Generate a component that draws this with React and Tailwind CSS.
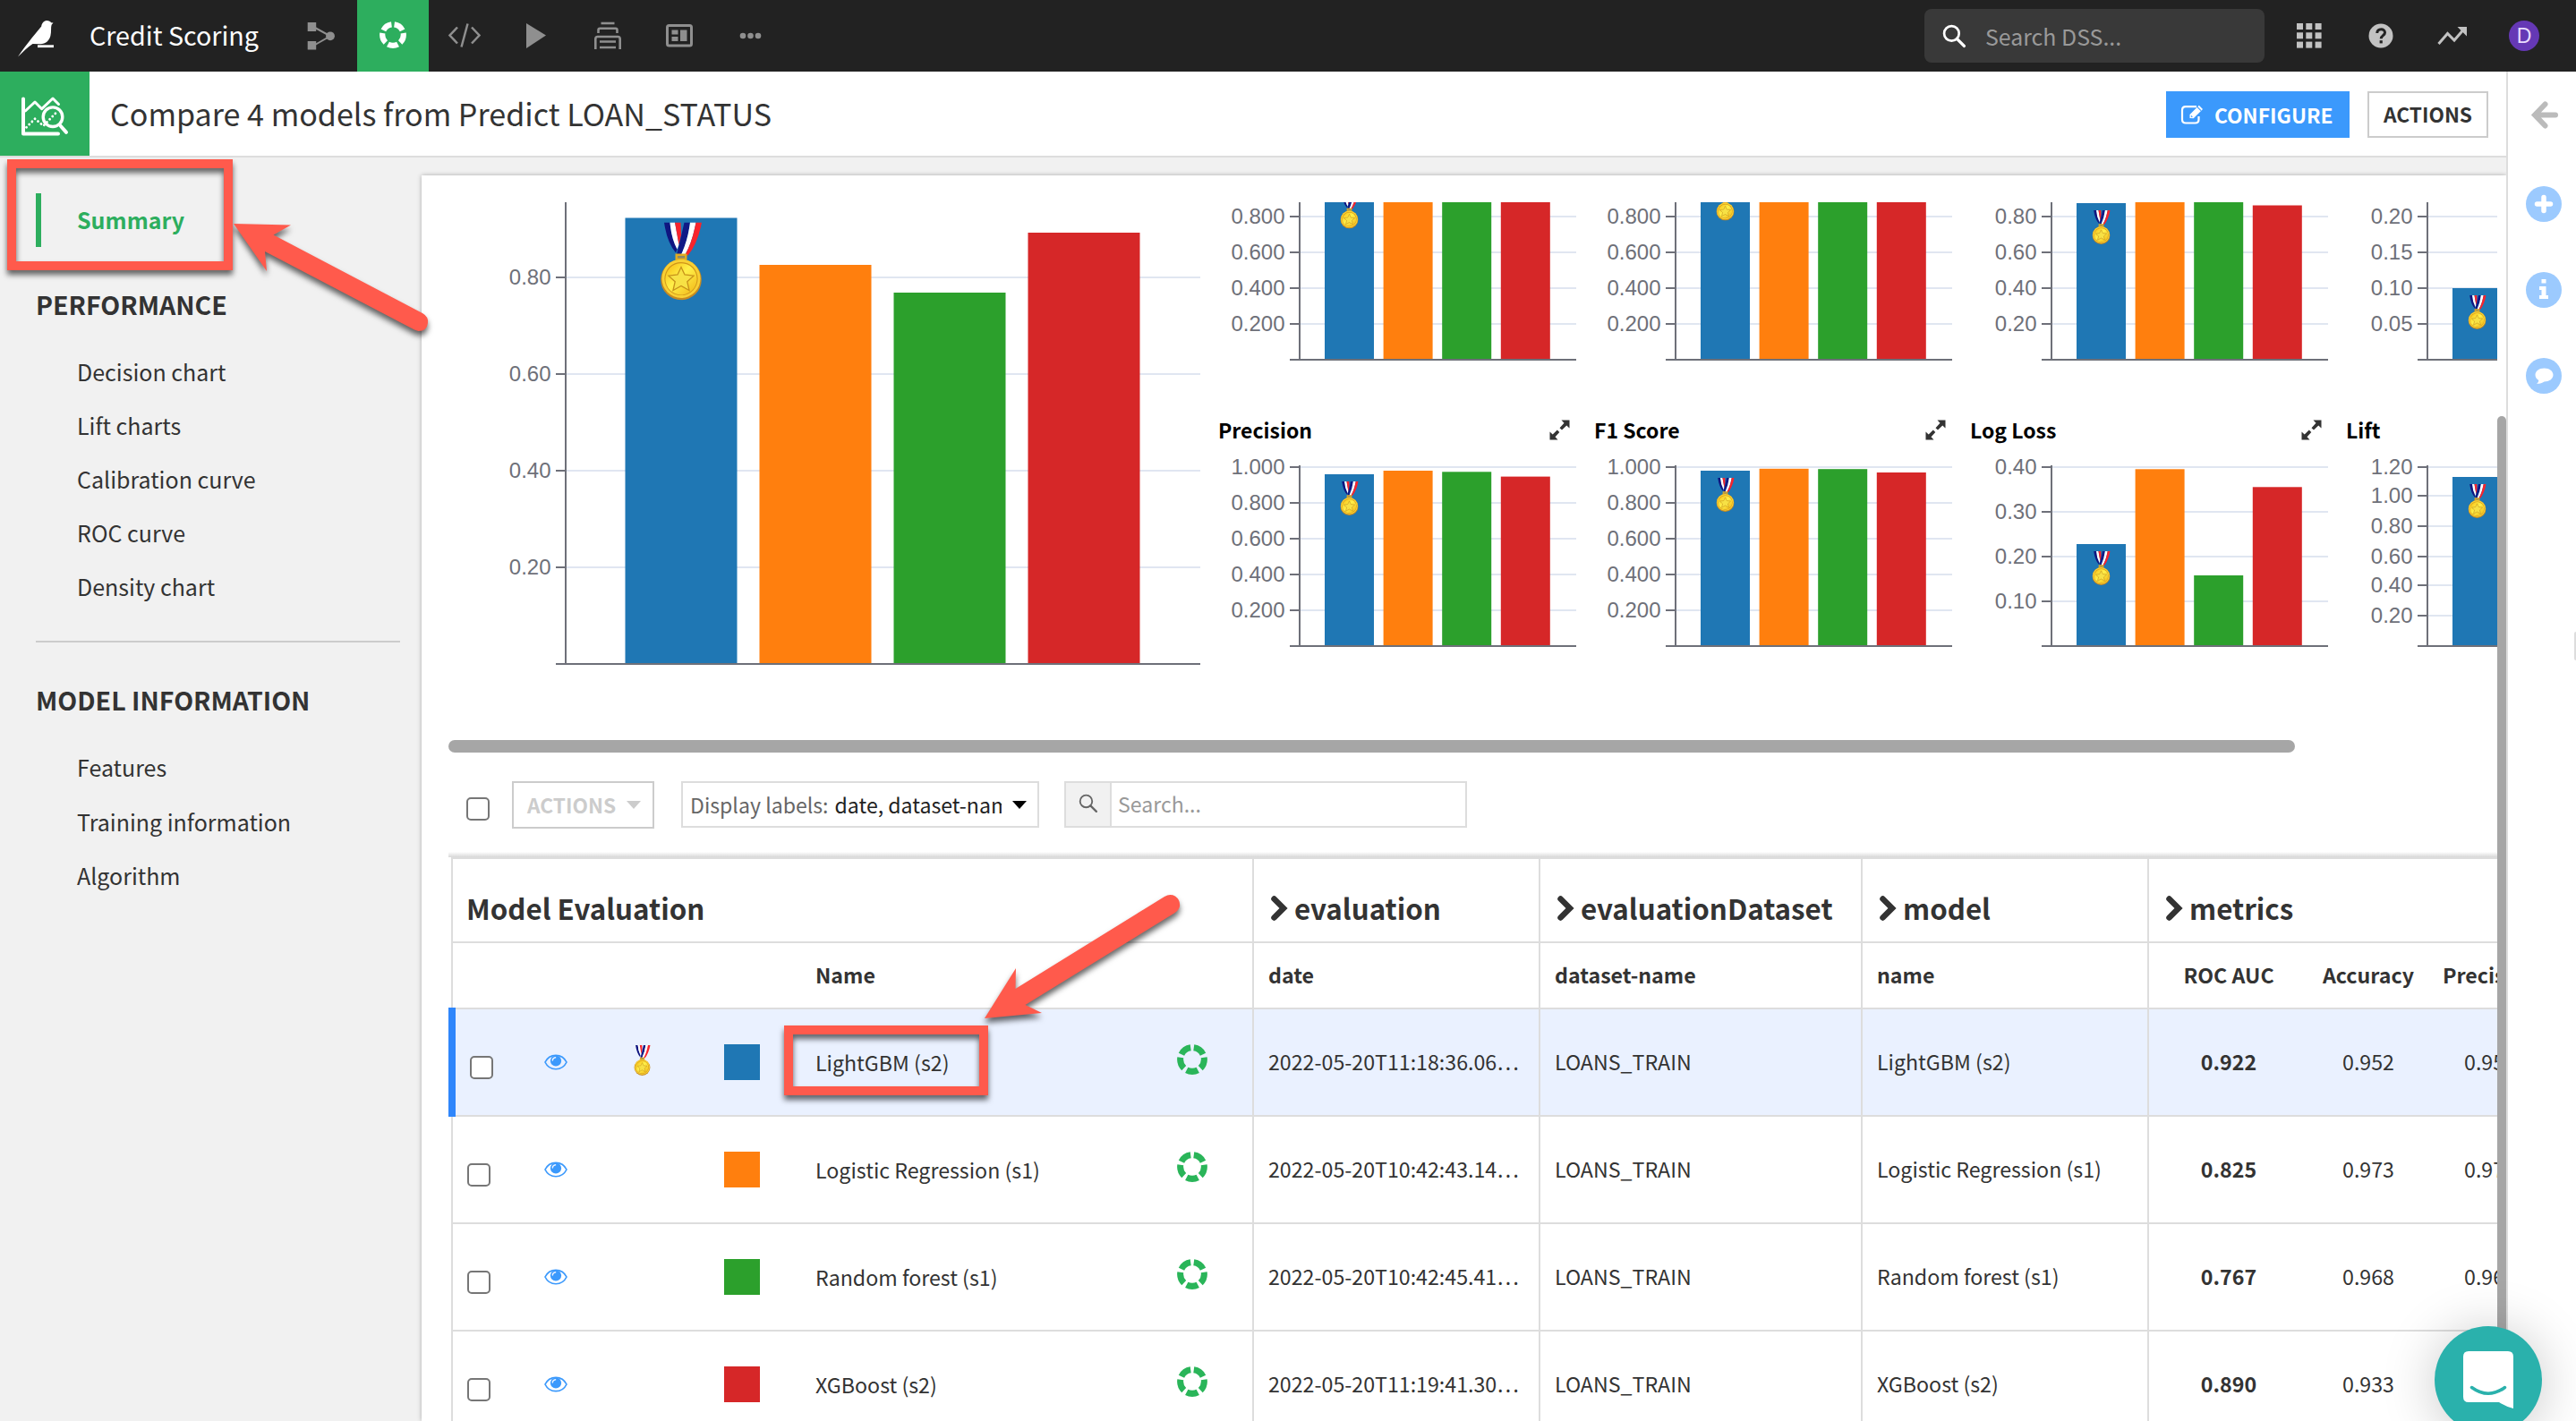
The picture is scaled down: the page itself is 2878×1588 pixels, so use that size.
import React, { useId } from "react";

const COLORS = ["#1f77b4", "#ff7f0e", "#2ca02c", "#d62728"];

/* ---------- icons ---------- */

function RecycleIcon({ size, color }) {
  return (
    <svg width={size} height={size} viewBox="0 0 30 30" fill="none">
      <circle
        cx="15"
        cy="15"
        r="11.8"
        stroke={color}
        strokeWidth="6.2"
        pathLength="100"
        strokeDasharray="15.6 4.4"
        strokeDashoffset="-2.2"
        transform="rotate(-90 15 15)"
      />
    </svg>
  );
}

function BirdLogo() {
  return (
    <svg width="44" height="46" viewBox="18 20 44 46" fill="#fff">
      <path d="M20 63.5 C25 56 30 49.5 35.5 42.5 L46.2 29.5 C46.8 25.5 49.3 23 52.5 23 C54.8 23 56.3 24 57 25.2 L59.5 25.6 L57.6 27.8 C56.6 31 57.6 35 56.4 40 C55 45.5 51 49.300 45 49.300 L36.500 49 C31 52.500 25.500 58 20 63.500 Z" />
      <rect x="42" y="50.300" width="18" height="2.800" />
    </svg>
  );
}

function FlowIcon() {
  return (
    <svg width="32" height="32" viewBox="343 23 32 32" fill="#8f8f8f">
      <rect x="343.700" y="24" width="9.500" height="10" />
      <rect x="343.700" y="45" width="9.500" height="9.500" />
      <circle cx="369" cy="39.300" r="4.900" />
      <path d="M352 30 L369 39.300 L352 49" fill="none" stroke="#8f8f8f" strokeWidth="2" />
    </svg>
  );
}

function CodeIcon() {
  return (
    <svg width="38" height="30" viewBox="0 0 38 30" fill="none" stroke="#8f8f8f" strokeWidth="2.500">
      <path d="M11 5.500 L2.500 14.500 L11 23.500 M27 5.500 L35.500 14.500 L27 23.500 M22.500 1.500 L15.500 27.500" />
    </svg>
  );
}

function PlayIcon() {
  return (
    <svg width="24" height="30" viewBox="0 0 24 30" fill="#8f8f8f">
      <path d="M1 1 L23 14.500 L1 29 Z" />
    </svg>
  );
}

function StackIcon() {
  return (
    <svg width="32" height="32" viewBox="0 0 32 32" fill="none" stroke="#8f8f8f" strokeWidth="2.600">
      <path d="M8.500 2 H23.500" />
      <path d="M5.500 13 V9.500 Q5.500 7.800 7.200 7.800 H24.800 Q26.500 7.800 26.500 9.500 V13" />
      <path d="M2.300 31 V19.500 Q2.300 17 4.800 17 H27.200 Q29.700 17 29.700 19.500 V31" />
      <path d="M7 22.500 H25 M7 29 H25" />
    </svg>
  );
}

function DashboardIcon() {
  return (
    <svg width="32" height="28" viewBox="0 0 32 28" fill="#8f8f8f">
      <rect x="2.500" y="2.500" width="27" height="22.500" rx="2" fill="none" stroke="#8f8f8f" strokeWidth="3" />
      <rect x="7.500" y="7.500" width="7" height="5" />
      <rect x="7.500" y="15" width="7" height="5" />
      <rect x="17" y="7.500" width="7.500" height="12.500" />
    </svg>
  );
}

function DotsIcon() {
  return (
    <svg width="26" height="8" viewBox="0 0 26 8" fill="#8f8f8f">
      <circle cx="4" cy="4" r="3.300" />
      <circle cx="12.500" cy="4" r="3.300" />
      <circle cx="21" cy="4" r="3.300" />
    </svg>
  );
}

function SearchIcon({ size, color, width }) {
  return (
    <svg width={size} height={size} viewBox="0 0 26 26" fill="none" stroke={color} strokeWidth={width}>
      <circle cx="10" cy="10" r="8" />
      <path d="M15.800 15.800 L23.500 23.500" strokeWidth={width * 1.25} strokeLinecap="round" />
    </svg>
  );
}

function GridIcon() {
  return (
    <svg width="28" height="28" viewBox="0 0 28 28" fill="#c2c2c2">
      {[0, 10.3, 20.6].map((y) =>
        [0, 10.3, 20.6].map((x) => <rect key={x + "-" + y} x={x} y={y} width="7" height="7" />)
      )}
    </svg>
  );
}

function HelpIcon() {
  return (
    <svg width="28" height="28" viewBox="0 0 28 28" fill="#c2c2c2">
      <circle cx="14" cy="14" r="13.500" />
      <path d="M9.800 11 C9.800 8.300 11.600 6.700 14.200 6.700 C16.800 6.700 18.500 8.300 18.500 10.500 C18.500 13.600 14.200 13.700 14.200 17.200" fill="none" stroke="#222" strokeWidth="3" />
      <rect x="12.600" y="19.200" width="3.200" height="3.200" fill="#222" />
    </svg>
  );
}

function TrendIcon() {
  return (
    <svg width="34" height="22" viewBox="0 0 34 22" fill="none" stroke="#c2c2c2" strokeWidth="3">
      <path d="M1.500 20 L11.500 8.500 L19 16 L29 4.500" />
      <path d="M22.500 1 H33 V11.500 Z" fill="#c2c2c2" stroke="none" />
    </svg>
  );
}

function ComparisonIcon() {
  return (
    <svg width="100" height="94" viewBox="0 0 100 94" fill="none" stroke="#fff" strokeWidth="4" strokeLinecap="round" strokeLinejoin="round">
      <path d="M26 30.500 V69.500 H65" />
      <path d="M28.300 44 L39 34 L46.700 41.700 L59 30 L65.500 36.500" strokeWidth="3" />
      <path d="M29.500 62.300 L39 52.700 L48.500 60.600 L62 46.700" strokeWidth="2.800" strokeDasharray="0.100 4.400" />
      <circle cx="59" cy="50.700" r="10.800" strokeWidth="3.400" />
      <path d="M67.500 60.500 L74 67.800" />
    </svg>
  );
}

function EditIcon() {
  return (
    <svg width="28" height="24" viewBox="0 0 28 24" fill="none" stroke="#fff" strokeWidth="2.200">
      <path d="M18 3.200 H6 Q2 3.200 2 7.200 V17.500 Q2 21.500 6 21.500 H16.500 Q20.500 21.500 20.500 17.500 V14" />
      <path d="M10.500 16 V12 L20.800 1.700 L25 5.900 L14.700 16.200 Z" fill="#fff" stroke="none" />
      <path d="M19 3.600 L23 7.600 M12 13.500 L13.300 14.800" stroke="#3b99fc" strokeWidth="1.200" />
    </svg>
  );
}

function EyeIcon() {
  return (
    <svg width="26" height="18" viewBox="0 0 26 18" fill="none">
      <path d="M1 9 C6 -1.300 20 -1.300 25 9 C20 19.300 6 19.300 1 9 Z" stroke="#3b99fc" strokeWidth="1.700" />
      <circle cx="13" cy="7.500" r="6.100" fill="#3b99fc" />
      <path d="M9.300 7 Q9.600 4 12.600 3.700" stroke="#eaf2ff" strokeWidth="1.400" strokeLinecap="round" />
    </svg>
  );
}

function ExpandIcon() {
  return (
    <svg width="23" height="23" viewBox="0 0 23 23" fill="#333">
      <path d="M13.500 0.500 H22.500 V9.500 L19.300 6.500 L14 11.500 L11.500 9.200 L16.500 3.700 Z" />
      <path d="M9.500 22.500 H0.500 V13.500 L3.700 16.500 L8.800 11.500 L11.300 14 L6.500 19.300 Z" />
    </svg>
  );
}

function ChevronIcon() {
  return (
    <svg width="21" height="30" viewBox="0 0 21 30" fill="none" stroke="#333" strokeWidth="6.500" strokeLinecap="round" strokeLinejoin="miter">
      <path d="M4.500 4.500 L15 15 L4.500 25.500" />
    </svg>
  );
}

function Medal({ x, y, width, height }) {
  const id = useId();
  return (
    <svg x={x} y={y} width={width} height={height} viewBox="0 0 46 87">
      <defs>
        <linearGradient id={id} x1="0" y1="0" x2="1" y2="1">
          <stop offset="0" stopColor="#f7b90f" />
          <stop offset="0.450" stopColor="#fff04a" />
          <stop offset="1" stopColor="#f0b414" />
        </linearGradient>
      </defs>
      <path d="M4 0 H10.500 Q12 18 18.500 30 L17 34 Q7 22 4 0 Z" fill="#0f1580" />
      <path d="M10.500 0 H16 L20.500 25 L18.500 30 Q12 18 10.500 0 Z" fill="#fff" />
      <path d="M16 0 H22.500 L23 14 L20.500 25 Z" fill="#f8242c" />
      <path d="M26.500 0 H33 Q30.500 20 23 36 H18 Q22.500 18 26.500 0 Z" fill="#101a86" />
      <path d="M33 0 H39.500 Q35.500 22 27.500 36 H23 Q30.500 20 33 0 Z" fill="#fff" />
      <path d="M39.500 0 H46 Q41.500 24 30.500 37 L27.500 36 Q35.500 22 39.500 0 Z" fill="#f8242c" />
      <path d="M16.500 35 H29.500 V44 H16.500 Z" fill="#e0ab22" />
      <path d="M19 37.500 H27 V40 H19 Z" fill="#8c8a6a" />
      <circle cx="23" cy="64" r="22.800" fill="#c58a22" />
      <circle cx="23" cy="62.800" r="21.600" fill="#f8d034" />
      <circle cx="23" cy="63" r="18.600" fill="#cf9418" />
      <circle cx="23" cy="63.300" r="17.600" fill={`url(#${id})`} />
      <path
        d="M23 50 L27 58.500 L37 59.700 L29.800 66.200 L32 76 L23 71 L14 76 L16.200 66.200 L9 59.700 L19 58.500 Z"
        fill="#f7e145"
        stroke="#c7921a"
        strokeWidth="1.300"
      />
    </svg>
  );
}

/* ---------- charts ---------- */

function BarChart({ width, height, tickX, axisX, axisTop, base, end, labelX, ticks, bars, barX, barW, pitch, medal }) {
  return (
    <svg width={width} height={height} className="block shrink-0">
      {ticks.map(([label, y]) => (
        <g key={label}>
          <rect x={axisX} y={y - 1} width={end - axisX} height="2" fill="#e0e6f1" />
          <rect x={tickX} y={y - 1} width={axisX - tickX} height="2" fill="#6e7079" />
          <text x={labelX} y={y + 7.5} textAnchor="end" fontSize="24" fill="#6e7079" className="font-['Liberation_Sans',sans-serif]">
            {label}
          </text>
        </g>
      ))}
      {bars.map((top, i) => (
        <rect key={i} x={barX + pitch * i} y={top} width={barW} height={base - top} fill={COLORS[i]} />
      ))}
      <rect x={axisX - 1} y={axisTop} width="2" height={base - axisTop} fill="#6e7079" />
      <rect x={tickX} y={base - 1} width={end - tickX} height="2" fill="#6e7079" />
      <Medal x={barX + barW / 2 - medal.w / 2} y={bars[0] + medal.gap} width={medal.w} height={medal.h} />
    </svg>
  );
}

const UPPER = [["0.800", 62], ["0.600", 102], ["0.400", 142], ["0.200", 182]];
const FULL = [["1.000", 22], ...UPPER];

/* The first four are scrolled under the panel's top edge, so only their lower part shows */
const SMALL_CHARTS = [
  { ticks: UPPER, bars: [29.5, 27, 28, 35] },
  { ticks: UPPER, bars: [20.5, 22, 22, 22] },
  { ticks: [["0.80", 62], ["0.60", 102], ["0.40", 142], ["0.20", 182]], bars: [47, 40, 42, 49.5] },
  { ticks: [["0.20", 62], ["0.15", 102], ["0.10", 142], ["0.05", 182]], bars: [142, 120, 120, 120] },
  { title: "Precision", ticks: FULL, bars: [30, 26, 27.3, 32.6] },
  { title: "F1 Score", ticks: FULL, bars: [26, 23.8, 24.2, 28] },
  { title: "Log Loss", ticks: [["0.40", 22], ["0.30", 72], ["0.20", 122], ["0.10", 172]], bars: [108, 24.3, 143, 44.3] },
  { title: "Lift", ticks: [["1.20", 22], ["1.00", 54], ["0.80", 88], ["0.60", 122], ["0.40", 154], ["0.20", 188]], bars: [33, 33, 33, 33] },
];

function SmallChart({ title, ticks, bars }) {
  return (
    <div className="h-80 w-[420px]">
      <div className="flex h-10 items-center justify-between pr-[27px]">
        {title && <span className="text-[23px] leading-10 font-bold text-black">{title}</span>}
        {title && <ExpandIcon />}
      </div>
      <BarChart
        width={420}
        height={280}
        tickX={80}
        axisX={91}
        axisTop={20}
        base={222}
        end={400}
        labelX={74.5}
        ticks={ticks}
        bars={bars}
        barX={119}
        barW={55}
        pitch={65.6}
        medal={{ w: 20.5, h: 38, gap: 8 }}
      />
    </div>
  );
}

/* ---------- page parts ---------- */

function TopBar() {
  const nav = [
    ["flow", <FlowIcon />],
    ["lab", <RecycleIcon size={30} color="#fff" />],
    ["code", <CodeIcon />],
    ["play", <PlayIcon />],
    ["stack", <StackIcon />],
    ["dash", <DashboardIcon />],
    ["more", <DotsIcon />],
  ];
  return (
    <header className="flex h-20 shrink-0 items-center bg-[#222]">
      <div className="flex w-[100px] items-center pt-1.5 pl-[18px]">
        <BirdLogo />
      </div>
      <div className="w-[219px] pb-0.5 text-[28.700px] leading-10 text-white">Credit Scoring</div>
      {nav.map(([key, icon]) => (
        <div key={key} className={key === "lab" ? "flex size-20 items-center justify-center bg-[#2dae5e] pb-0.5" : "flex size-20 items-center justify-center"}>
          {icon}
        </div>
      ))}
      <div className="mr-2.5 ml-auto flex h-15 w-[380px] items-center rounded-lg bg-[#393939] pl-5">
        <SearchIcon size={27} color="#fff" width={2.6} />
        <span className="ml-[21px] text-[24.900px] leading-10 text-[#999]">Search DSS...</span>
      </div>
      <div className="mr-[18px] flex">
        <div className="flex size-20 items-center justify-center"><GridIcon /></div>
        <div className="flex size-20 items-center justify-center"><HelpIcon /></div>
        <div className="flex size-20 items-center justify-center"><TrendIcon /></div>
        <div className="flex size-20 items-center justify-center">
          <div className="flex size-[34px] items-center justify-center rounded-full bg-[#6538b5] font-['Liberation_Sans',sans-serif] text-[23px] leading-none text-[#e8dcff]">D</div>
        </div>
      </div>
    </header>
  );
}

function TitleBar() {
  return (
    <div className="flex h-24 shrink-0 items-start border-b-2 border-[#ddd] bg-white pr-5">
      <div className="h-[94px] w-[100px] bg-[#2dae5e]"><ComparisonIcon /></div>
      <h1 className="ml-[23px] text-[34.100px] leading-[93px] font-normal text-[#333]">Compare 4 models from Predict LOAN_STATUS</h1>
      <button className="mt-[22px] ml-auto flex h-[52px] w-[205px] items-center gap-[10px] bg-[#3b99fc] pl-4 text-[22.800px] leading-[51px] font-bold text-white">
        <EditIcon />
        CONFIGURE
      </button>
      <button className="mt-[22px] ml-5 h-[52px] w-[135px] border-2 border-[#ccc] bg-white text-[22.700px] leading-[46px] font-bold text-[#333]">ACTIONS</button>
    </div>
  );
}

function NavItem({ children }) {
  return <div className="h-[60.1px] pl-[86px] text-[25px] leading-[62px] text-[#333]">{children}</div>;
}

function Sidebar() {
  return (
    <nav className="w-[471px] shrink-0 pt-10">
      <div className="ml-10 h-15 border-l-[6px] border-[#2dae5e] pl-10 text-[25px] leading-[58px] font-bold text-[#2dae5e]">
        Summary
      </div>
      <h2 className="mt-5 h-[88px] pl-10 text-[28.500px] leading-[88px] font-bold text-[#333]">PERFORMANCE</h2>
      {["Decision chart", "Lift charts", "Calibration curve", "ROC curve", "Density chart"].map((t) => <NavItem key={t}>{t}</NavItem>)}
      <div className="mt-8 ml-10 h-0.5 w-[407px] bg-[#ccc]" />
      <h2 className="mt-4 h-[92px] pl-10 text-[28.500px] leading-[95px] font-bold text-[#333]">MODEL INFORMATION</h2>
      {["Features", "Training information", "Algorithm"].map((t) => <NavItem key={t}>{t}</NavItem>)}
    </nav>
  );
}

function Checkbox({ className = "" }) {
  return <div className={"size-[26px] shrink-0 rounded-[5px] border-2 border-[#767676] bg-white " + className} />;
}

function Caret({ color }) {
  return (
    <svg width="16" height="9" viewBox="0 0 16 9" className="shrink-0" fill={color}>
      <path d="M0 0 H16 L8 9 Z" />
    </svg>
  );
}

function Toolbar() {
  return (
    <div className="flex h-[117px] shrink-0 items-start pt-8 pl-5 text-[23.100px]">
      <Checkbox className="mt-[18px]" />
      <div className="ml-[25px] flex h-[53px] w-[159px] items-center border-2 border-[#ccc] pl-[15px] text-[22.700px] leading-[47px] font-bold text-[#ccc]">
        ACTIONS
        <span className="ml-3"><Caret color="#ccc" /></span>
      </div>
      <div className="ml-[30px] flex h-[52px] w-[400px] items-center border-2 border-[#ddd] pl-2 leading-[47px] text-[#666]">
        <div className="w-[348px] overflow-hidden whitespace-nowrap">
          Display labels:<span className="ml-[7px] text-[#222]">date, dataset-name</span>
        </div>
        <span className="ml-3"><Caret color="#000" /></span>
      </div>
      <div className="ml-7 flex h-[52px] w-[450px] border-2 border-[#ddd]">
        <div className="flex w-[51px] items-center justify-center border-r-2 border-[#ddd] bg-[#f1f1f1] pb-0.5">
          <SearchIcon size={22} color="#666" width={2.2} />
        </div>
        <span className="pl-[7px] leading-[47px] text-[#999]">Search...</span>
      </div>
    </div>
  );
}

const GROUPS = [
  ["evaluation", "w-[320px]"],
  ["evaluationDataset", "w-[360px]"],
  ["model", "w-[320px]"],
  ["metrics", "w-[700px]"],
];

const ROWS = [
  { name: "LightGBM (s2)", date: "2022-05-20T11:18:36.06…", auc: "0.922", acc: "0.952", prec: "0.957", best: true },
  { name: "Logistic Regression (s1)", date: "2022-05-20T10:42:43.14…", auc: "0.825", acc: "0.973", prec: "0.976" },
  { name: "Random forest (s1)", date: "2022-05-20T10:42:45.41…", auc: "0.767", acc: "0.968", prec: "0.969" },
  { name: "XGBoost (s2)", date: "2022-05-20T11:19:41.30…", auc: "0.890", acc: "0.933", prec: "0.947" },
];
const SWATCHES = ["bg-[#1f77b4]", "bg-[#ff7f0e]", "bg-[#2ca02c]", "bg-[#d62728]"];

function EvaluationTable() {
  return (
    <div className="w-[2400px] shrink-0 text-[23.200px] text-[#333]">
      <div className="-mt-[6px] h-[6px] w-full bg-linear-to-t from-[#d8d8d8] to-white" />
      <div className="ml-[3px] border-t-2 border-l-2 border-[#ddd]">
        <div className="flex h-[94px] border-b-2 border-[#ddd] text-[31.300px] leading-[110px] font-bold">
          <div className="w-[895px] shrink-0 border-r-2 border-[#ddd] pl-[15px]">Model Evaluation</div>
          {GROUPS.map(([g, w]) => (
            <div key={g} className={"flex shrink-0 items-start border-r-2 border-[#ddd] pl-[18px] " + w}>
              <span className="mt-10"><ChevronIcon /></span>
              <span className="ml-1.5">{g}</span>
            </div>
          ))}
        </div>
        <div className="flex h-[74px] border-b-2 border-[#ddd] leading-[71px] font-bold">
          <div className="w-[895px] shrink-0 border-r-2 border-[#ddd] pl-[405px]">Name</div>
          <div className="w-[320px] shrink-0 border-r-2 border-[#ddd] pl-4">date</div>
          <div className="w-[360px] shrink-0 border-r-2 border-[#ddd] pl-4">dataset-name</div>
          <div className="w-[320px] shrink-0 border-r-2 border-[#ddd] pl-4">name</div>
          <div className="ml-[11px] w-[156px] shrink-0 text-center">ROC AUC</div>
          <div className="w-[156px] shrink-0 text-center">Accuracy</div>
          <div className="w-[116px] shrink-0 text-center">Precision</div>
        </div>
        {ROWS.map((r, i) => (
          <div
            key={r.name}
            className={
              r.best
                ? "-mt-0.5 -ml-[5px] flex h-[122px] border-l-[8px] border-[#2f86fb] leading-[117px]"
                : "flex h-[120px] leading-[116px]"
            }
          >
            <div className={r.best ? "flex w-full border-y-2 border-[#ddd] bg-[#eaf1ff]" : "flex w-full border-b-2 border-[#ddd]"}>
              <div className={r.best ? "flex w-[892px] shrink-0 items-center border-r-2 border-[#ddd]" : "flex w-[895px] shrink-0 items-center border-r-2 border-[#ddd]"}>
                <div className={r.best ? "w-[99px] pt-3 pl-4" : "w-[102px] pt-3 pl-4"}><Checkbox /></div>
                <div className="w-[100px]"><EyeIcon /></div>
                <div className="w-[101px] pb-1">
                  {r.best && (
                    <svg width="19" height="34" className="block"><Medal x={0} y={0} width={19} height={34} /></svg>
                  )}
                </div>
                <div className="w-[102px]"><div className={"size-10 " + SWATCHES[i]} /></div>
                <div className="w-[404px]">{r.name}</div>
                <div className="pb-[7px]"><RecycleIcon size={34} color="#2ab559" /></div>
              </div>
              <div className="w-[320px] shrink-0 border-r-2 border-[#ddd] pl-4">{r.date}</div>
              <div className="w-[360px] shrink-0 border-r-2 border-[#ddd] pl-4">LOANS_TRAIN</div>
              <div className="w-[320px] shrink-0 border-r-2 border-[#ddd] pl-4">{r.name}</div>
              <div className="ml-[11px] w-[156px] shrink-0 text-center font-bold">{r.auc}</div>
              <div className="w-[156px] shrink-0 text-center">{r.acc}</div>
              <div className="w-[116px] shrink-0 text-center">{r.prec}</div>
            </div>
          </div>
        ))}
      </div>
    </div>
  );
}

function ContentPanel() {
  return (
    <main className="mt-5 flex h-[1392px] w-[2329px] bg-white shadow-[0_0_5px_rgba(0,0,0,0.3)]">
      <div className="ml-[30px] flex w-[2289px] shrink-0 flex-col overflow-hidden pt-[30px]">
        <div className="flex h-[601px] shrink-0 overflow-hidden">
          <BarChart
            width={860}
            height={600}
            tickX={120}
            axisX={131}
            axisTop={0}
            base={516}
            end={840}
            labelX={114.5}
            ticks={[["0.80", 84], ["0.60", 192], ["0.40", 300], ["0.20", 408]]}
            bars={[17.5, 70, 101, 34]}
            barX={197.5}
            barW={125}
            pitch={150}
            medal={{ w: 46, h: 87, gap: 5 }}
          />
          <div className="-mt-[86px] grid h-[640px] w-[1680px] shrink-0 grid-cols-4">
            {SMALL_CHARTS.map((c, i) => <SmallChart key={i} {...c} />)}
          </div>
        </div>
        <div className="h-3.5 w-[2063px] shrink-0 rounded-full bg-[#a6a6a6]" />
        <Toolbar />
        <EvaluationTable />
      </div>
      <div className="mt-[269px] w-2.5 rounded-t-full bg-[#a6a6a6]" />
    </main>
  );
}

function RightRail() {
  return (
    <aside className="relative flex w-[78px] shrink-0 flex-col items-center border-l-2 border-[#ddd] bg-white pt-[33px]">
      <svg width="32" height="32" viewBox="0 0 32 32" className="ml-1.5" fill="none" stroke="#bbb" strokeWidth="6" strokeLinecap="round" strokeLinejoin="miter">
        <path d="M16.500 3.500 L5 15.500 L16.500 27.500 M6 15.500 H28" />
      </svg>
      <div className="mt-[63px] ml-[3px] flex flex-col gap-14">
        <svg width="40" height="40" viewBox="0 0 40 40">
          <circle cx="20" cy="20" r="20" fill="#9ccafe" />
          <path d="M20 12.500 V27.500 M12.500 20 H27.500" stroke="#fff" strokeWidth="5.500" strokeLinecap="round" />
        </svg>
        <svg width="40" height="40" viewBox="0 0 40 40">
          <circle cx="20" cy="20" r="20" fill="#9ccafe" />
          <path d="M17.500 8 H22.500 V12.500 H17.500 Z M15 16 H22.500 V26 H25 V30 H15 V26 H17.500 V20 H15 Z" fill="#fff" />
        </svg>
        <svg width="40" height="40" viewBox="0 0 40 40">
          <circle cx="20" cy="20" r="20" fill="#9ccafe" />
          <path d="M20.500 11.500 C26.500 11.500 30.500 15 30.500 19 C30.500 23.500 26 26.500 20.500 26.500 C18 28.300 15 29 12 28.800 C13.300 28 14.300 26.500 14.300 25 C12 23.500 10.500 21.500 10.500 19 C10.500 15 14.500 11.500 20.500 11.500 Z" fill="#fff" />
        </svg>
      </div>
      <div className="absolute top-[626px] right-0 h-[32px] w-0.5 rounded-l bg-[#ddd]" />
    </aside>
  );
}

function ChatLauncher() {
  return (
    <div className="absolute top-[1482px] left-[2720px] flex size-30 items-center justify-center rounded-full bg-[#2ab1ac] shadow-[0_4px_60px_rgba(0,0,0,0.22)]">
      <svg width="56" height="64" viewBox="0 0 56 64">
        <path d="M6 0 H50 Q56 0 56 6 V64 Q48 62 40 57 H6 Q0 57 0 51 V6 Q0 0 6 0 Z" fill="#fff" />
        <path d="M9.500 40.500 Q28 54 46.500 40.500" fill="none" stroke="#2ab1ac" strokeWidth="3.500" strokeLinecap="round" />
      </svg>
    </div>
  );
}

/* Red call-out frames and arrows laid over the page */
function Callouts() {
  return (
    <svg width="1340" height="1260" viewBox="0 0 1340 1260" className="pointer-events-none absolute top-0 left-0 drop-shadow-[0_5px_3px_rgba(0,0,0,0.6)]">
      <g fill="none" stroke="#ff5a4c" strokeWidth="10">
        <rect x="13" y="183" width="242" height="114" />
        <rect x="881" y="1151" width="218" height="68" />
      </g>
      <g fill="#ff5a4c">
        <path d="M261 250 L325 251.500 L305.500 262.500 L472 350 Q479 354 478 361 Q477 370 467.500 370 L463 368.500 L296 281 L298 303 Z" />
        <path d="M1100 1138 L1135 1082 L1134.500 1105 L1301 1002 Q1307 998.500 1313 1001.500 Q1319 1006 1318 1013 Q1317 1017 1312 1020.500 L1145.500 1123 L1164 1132 Z" />
      </g>
    </svg>
  );
}

export default function App() {
  return (
    <div className="relative flex h-[1588px] w-[2878px] flex-col overflow-hidden bg-[#f1f1f1] font-['Noto_Sans_CJK_SC','Source_Sans_Pro',sans-serif]">
      <TopBar />
      <div className="flex min-h-0 flex-1">
        <div className="flex w-[2800px] shrink-0 flex-col overflow-hidden">
          <TitleBar />
          <div className="flex">
            <Sidebar />
            <ContentPanel />
          </div>
        </div>
        <RightRail />
      </div>
      <ChatLauncher />
      <Callouts />
    </div>
  );
}
